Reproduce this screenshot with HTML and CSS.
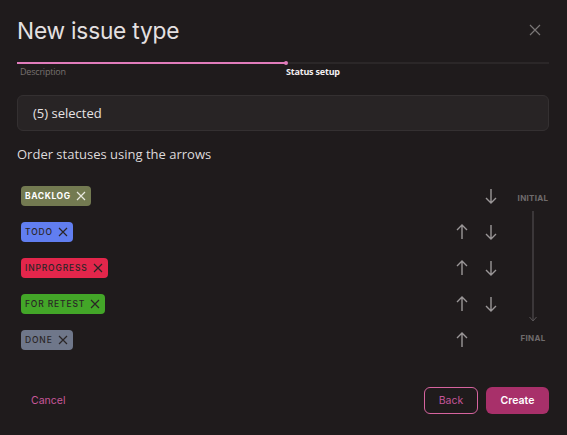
FILE: index.html
```html
<!DOCTYPE html>
<html>
<head>
<meta charset="utf-8">
<link rel="stylesheet" href="styles.css">
</head>
<body>
<div class="modal">
  <div class="header">
    <h1 class="title">New issue type</h1>
    <button class="close" aria-label="Close">
      <svg width="12" height="12" viewBox="0 0 12 12"><path d="M1 1L11 11M11 1L1 11" stroke="#7a7677" stroke-width="1.2" fill="none"/></svg>
    </button>
  </div>
  <div class="steps">
    <div class="track"><div class="fill"></div><div class="dot"></div></div>
    <div class="step-labels">
      <span class="step">Description</span>
      <span class="step active">Status setup</span>
    </div>
  </div>
  <div class="select">(5) selected</div>
  <p class="hint">Order statuses using the arrows</p>
  <div class="order">
    <div class="rows">
      <div class="row">
        <span class="tag backlog">BACKLOG <svg class="x" viewBox="0 0 10 10"><path d="M1 1L9 9M9 1L1 9"/></svg></span>
        <span class="slot"></span>
        <span class="slot"><svg class="arrow" viewBox="0 0 12 16"><path d="M6 1V15M1 10L6 15L11 10"/></svg></span>
      </div>
      <div class="row">
        <span class="tag todo">TODO <svg class="x" viewBox="0 0 10 10"><path d="M1 1L9 9M9 1L1 9"/></svg></span>
        <span class="slot"><svg class="arrow" viewBox="0 0 12 16"><path d="M6 15V1M1 6L6 1L11 6"/></svg></span>
        <span class="slot"><svg class="arrow" viewBox="0 0 12 16"><path d="M6 1V15M1 10L6 15L11 10"/></svg></span>
      </div>
      <div class="row">
        <span class="tag inprogress">INPROGRESS <svg class="x" viewBox="0 0 10 10"><path d="M1 1L9 9M9 1L1 9"/></svg></span>
        <span class="slot"><svg class="arrow" viewBox="0 0 12 16"><path d="M6 15V1M1 6L6 1L11 6"/></svg></span>
        <span class="slot"><svg class="arrow" viewBox="0 0 12 16"><path d="M6 1V15M1 10L6 15L11 10"/></svg></span>
      </div>
      <div class="row">
        <span class="tag retest">FOR RETEST <svg class="x" viewBox="0 0 10 10"><path d="M1 1L9 9M9 1L1 9"/></svg></span>
        <span class="slot"><svg class="arrow" viewBox="0 0 12 16"><path d="M6 15V1M1 6L6 1L11 6"/></svg></span>
        <span class="slot"><svg class="arrow" viewBox="0 0 12 16"><path d="M6 1V15M1 10L6 15L11 10"/></svg></span>
      </div>
      <div class="row">
        <span class="tag done">DONE <svg class="x" viewBox="0 0 10 10"><path d="M1 1L9 9M9 1L1 9"/></svg></span>
        <span class="slot"><svg class="arrow" viewBox="0 0 12 16"><path d="M6 15V1M1 6L6 1L11 6"/></svg></span>
        <span class="slot"></span>
      </div>
    </div>
    <div class="side">
      <span class="side-label">INITIAL</span>
      <div class="line">
        <svg width="10" height="112" viewBox="0 0 10 112"><path d="M5 0V110M1.5 106L5 110L8.5 106" stroke="#595557" stroke-width="1" fill="none"/></svg>
      </div>
      <span class="side-label final">FINAL</span>
    </div>
  </div>
  <div class="footer">
    <button class="cancel">Cancel</button>
    <div class="actions">
      <button class="btn back">Back</button>
      <button class="btn create">Create</button>
    </div>
  </div>
</div>
</body>
</html>
```
FILE: styles.css
```css
* { box-sizing: border-box; }
html, body { margin: 0; padding: 0; background: #1f1b1c; }
body { width: 567px; height: 435px; overflow: hidden; font-family: "Open Sans", sans-serif; color: #e0dcdd; }
.modal { padding: 0 18px 0 17px; }
.header { display: flex; justify-content: space-between; align-items: center; height: 62px; padding-bottom: 2px; }
.title { margin: 0; font-family: "Inter", sans-serif; font-weight: 400; font-size: 22.7px; letter-spacing: -0.2px; color: #e4e0e1; }
.close { background: none; border: 0; padding: 0; margin-right: 8px; width: 12px; height: 12px; display: flex; }
.track { position: relative; height: 2px; background: #2b2728; }
.fill { width: 269px; height: 2px; background: #e07cbb; }
.dot { position: absolute; left: 267px; top: -1px; width: 4px; height: 4px; border-radius: 50%; background: #e07cbb; }
.step-labels { display: flex; padding-top: 1px; }
.step { font-size: 9px; color: #77716f; width: 270px; padding-left: 3px; letter-spacing: -0.2px; }
.step.active { color: #f2eeef; font-weight: 700; }
.select { margin-top: 17px; height: 36px; border: 1px solid #343031; background: #282425; border-radius: 6px; display: flex; align-items: center; padding-left: 15px; font-size: 13px; color: #e6e2e3; }
.hint { margin: 14px 0 0; font-size: 13px; color: #dedadb; line-height: 18px; }
.order { display: flex; margin-top: 23px; margin-left: 4px; }
.rows { flex: 1; display: flex; flex-direction: column; gap: 16px; }
.row { display: flex; align-items: center; height: 20px; }
.tag { display: inline-flex; align-items: center; height: 20px; padding: 0 5px 0 4px; border-radius: 4px; font-family: "Inter", sans-serif; font-size: 8.5px; font-weight: 500; letter-spacing: 0.85px; color: #2a2526; margin-right: auto; }
.tag .x { width: 10px; height: 10px; margin-left: 5px; stroke: #2a2526; stroke-width: 1.2; fill: none; }
.backlog { background: #737a51; color: #ffffff; font-weight: 700; letter-spacing: 0.6px; }
.backlog .x { stroke: #e8e8e0; }
.todo { background: #617ef0; }
.inprogress { background: #e3264b; }
.retest { background: #43a628; }
.done { background: #6f778a; }
.slot { width: 24px; display: flex; justify-content: center; }
.slot + .slot { margin-left: 5px; }
.arrow { width: 12px; height: 16px; stroke: #9a9697; stroke-width: 1.4; fill: none; }
.side { width: 32px; margin-left: 14px; display: flex; flex-direction: column; align-items: center; }
.side-label { font-family: "Inter", sans-serif; font-size: 8px; font-weight: 700; color: #6f6b6c; letter-spacing: 0.3px; line-height: 10px; }
.side-label:first-child { margin-top: 7px; }
.line { margin-top: 8px; height: 112px; display: flex; justify-content: center; }
.final { margin-top: 10px; }
.footer { display: flex; justify-content: space-between; align-items: center; margin-top: 37px; }
.cancel { background: none; border: 0; font-family: "Inter", sans-serif; font-size: 10.5px; color: #c8579a; padding: 0; margin-left: 14px; }
.actions { display: flex; gap: 8px; }
.btn { height: 27px; border-radius: 6px; font-family: "Inter", sans-serif; font-size: 10.5px; padding: 0; }
.back { width: 54px; background: none; border: 1px solid #d6649f; color: #c4559a; }
.create { width: 63px; background: #a8306a; border: 0; color: #ffffff; font-weight: 600; }
```
